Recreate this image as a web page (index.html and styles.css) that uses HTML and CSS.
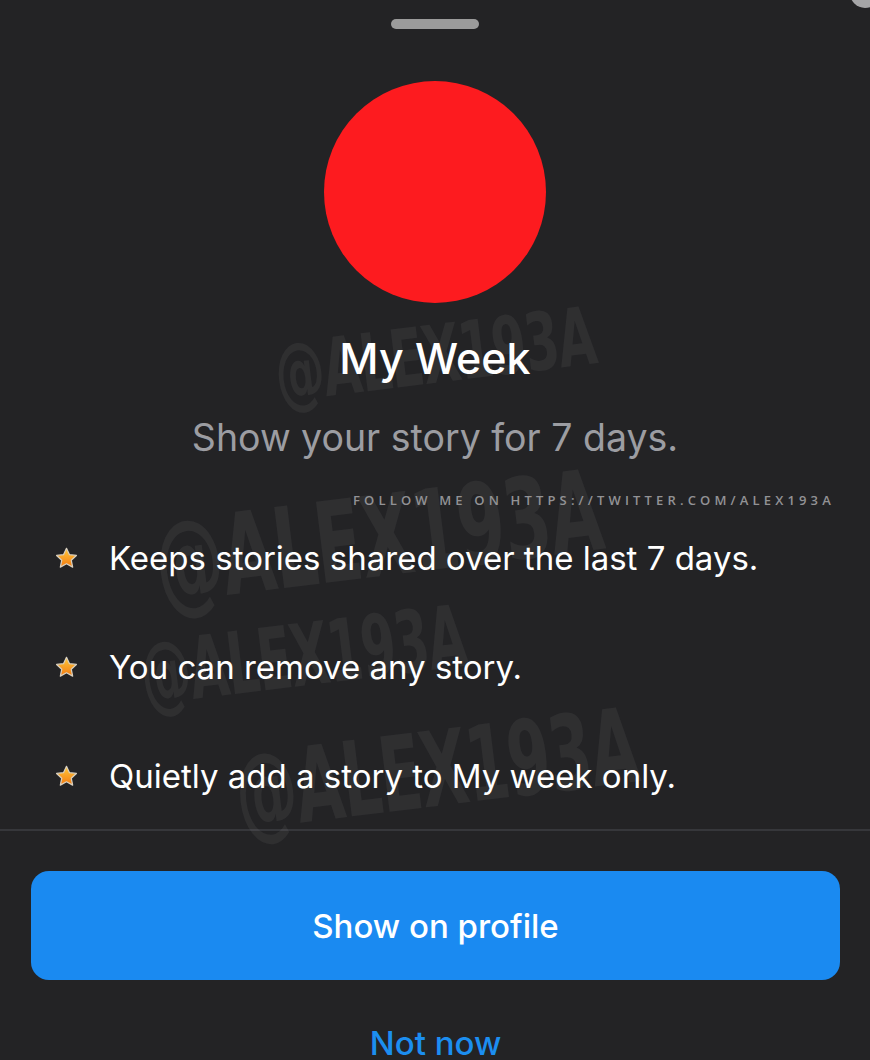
FILE: index.html
```html
<!DOCTYPE html>
<html>
<head>
<meta charset="utf-8">
<link rel="stylesheet" href="styles.css">
</head>
<body>
<div class="sheet">
  <div class="corner"></div>
  <div class="handle"></div>
  <div class="avatar"></div>
  <h1 class="title">My Week</h1>
  <p class="subtitle">Show your story for 7 days.</p>
  <ul class="features">
    <li class="feature"><svg class="star" viewBox="0 0 24 24"><defs><linearGradient id="sg" x1="0" y1="0" x2="0" y2="1"><stop offset="0" stop-color="#ffc93a"/><stop offset="1" stop-color="#f27a12"/></linearGradient></defs><path d="M12 2.2l2.9 6.1 6.6.8-4.9 4.6 1.3 6.6L12 17l-5.9 3.3 1.3-6.6-4.9-4.6 6.6-.8z" fill="url(#sg)" stroke="#d9d0c0" stroke-width="1.2" stroke-linejoin="round"/></svg><span>Keeps stories shared over the last 7 days.</span></li>
    <li class="feature"><svg class="star" viewBox="0 0 24 24"><path d="M12 2.2l2.9 6.1 6.6.8-4.9 4.6 1.3 6.6L12 17l-5.9 3.3 1.3-6.6-4.9-4.6 6.6-.8z" fill="url(#sg)" stroke="#d9d0c0" stroke-width="1.2" stroke-linejoin="round"/></svg><span>You can remove any story.</span></li>
    <li class="feature"><svg class="star" viewBox="0 0 24 24"><path d="M12 2.2l2.9 6.1 6.6.8-4.9 4.6 1.3 6.6L12 17l-5.9 3.3 1.3-6.6-4.9-4.6 6.6-.8z" fill="url(#sg)" stroke="#d9d0c0" stroke-width="1.2" stroke-linejoin="round"/></svg><span>Quietly add a story to My week only.</span></li>
  </ul>
  <div class="divider"></div>
  <div class="actions">
    <button class="primary">Show on profile</button>
    <button class="secondary">Not now</button>
  </div>

  <div class="wm wm1">@ALEX193A</div>
  <div class="wm wm2">@ALEX193A</div>
  <div class="wm wm3">@ALEX193A</div>
  <div class="wm wm4">@ALEX193A</div>
  <div class="follow">FOLLOW ME ON HTTPS://TWITTER.COM/ALEX193A</div>
</div>
</body>
</html>
```
FILE: styles.css
```css
* { box-sizing: border-box; }
html, body { margin: 0; padding: 0; }
body {
  background: #232325;
  width: 870px;
  height: 1060px;
  overflow: hidden;
  font-family: Inter, "Liberation Sans", sans-serif;
  color: #fff;
}
.sheet {
  position: relative;
  width: 870px;
  height: 1060px;
  padding-top: 19px;
  display: flex;
  flex-direction: column;
  align-items: center;
}
.sheet > * { flex-shrink: 0; }
.corner {
  position: absolute;
  right: -10px;
  top: -22px;
  width: 30px;
  height: 30px;
  border-radius: 50%;
  background: #a5a5a7;
}
.handle {
  width: 88px;
  height: 10px;
  border-radius: 5px;
  background: #9b9b9b;
}
.avatar {
  margin-top: 52px;
  width: 222px;
  height: 222px;
  border-radius: 50%;
  background: #fd1b1f;
}
.title {
  margin: 30px 0 0;
  font-size: 43px;
  line-height: 50px;
  font-weight: 500;
  color: #fff;
  position: relative;
  z-index: 2;
}
.subtitle {
  margin: 32px 0 0;
  font-size: 37.5px;
  line-height: 46px;
  color: #9c9da2;
  position: relative;
  z-index: 2;
}
.features {
  list-style: none;
  margin: 77px 0 0;
  padding: 0 0 0 54px;
  align-self: stretch;
  display: flex;
  flex-direction: column;
  gap: 69px;
  position: relative;
  z-index: 2;
}
.feature {
  display: flex;
  align-items: center;
  height: 40px;
  font-size: 33px;
  color: #fff;
}
.star {
  width: 25px;
  height: 25px;
  margin-right: 30px;
  flex-shrink: 0;
}
.divider {
  margin-top: 33px;
  align-self: stretch;
  height: 2px;
  background: #36373b;
}
.actions {
  align-self: stretch;
  display: flex;
  flex-direction: column;
  align-items: center;
  padding: 40px 30px 0 31px;
}
.actions > * { flex-shrink: 0; }
.primary {
  width: 100%;
  height: 109px;
  border: 0;
  border-radius: 18px;
  background: #1a8af1;
  color: #fff;
  font-family: Inter, "Liberation Sans", sans-serif;
  font-size: 33px;
  font-weight: 500;
}
.secondary {
  margin-top: 39px;
  border: 0;
  background: none;
  padding: 0;
  color: #1c8ef0;
  font-family: Inter, "Liberation Sans", sans-serif;
  font-size: 33px;
  line-height: 48px;
  font-weight: 500;
}
.wm {
  position: absolute;
  z-index: 1;
  font-family: "Liberation Sans Narrow", "DejaVu Sans Condensed", sans-serif;
  font-weight: 700;
  color: rgba(255, 255, 255, 0.055);
  white-space: nowrap;
  letter-spacing: -2px;
  transform-origin: left bottom;
  line-height: 1;
}
.wm1 { left: 280px; top: 335px; font-size: 80px; transform: rotate(-7deg) scaleX(0.69); }
.wm2 { left: 162px; top: 508px; font-size: 112px; transform: rotate(-7deg) scaleX(0.68); }
.wm3 { left: 146px; top: 632px; font-size: 86px; transform: rotate(-7deg) scaleX(0.65); }
.wm4 { left: 242px; top: 742px; font-size: 104px; transform: rotate(-7deg) scaleX(0.66); }
.follow {
  position: absolute;
  z-index: 3;
  left: 353px;
  top: 492px;
  font-family: "Open Sans", "Liberation Sans", sans-serif;
  font-size: 13px;
  line-height: 16px;
  letter-spacing: 4.15px;
  font-weight: 600;
  color: #929295;
  white-space: nowrap;
}
```
